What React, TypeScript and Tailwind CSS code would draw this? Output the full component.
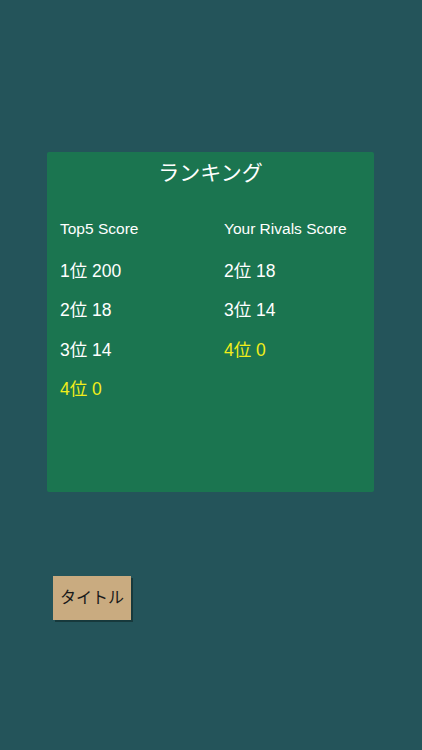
import React from "react";

const top5 = [
  { rank: 1, score: 200, me: false },
  { rank: 2, score: 18, me: false },
  { rank: 3, score: 14, me: false },
  { rank: 4, score: 0, me: true },
];

const rivals = [
  { rank: 2, score: 18, me: false },
  { rank: 3, score: 14, me: false },
  { rank: 4, score: 0, me: true },
];

const font = {
  fontFamily: '"Liberation Sans", "Noto Sans CJK JP", sans-serif',
};

function ScoreColumn({
  label,
  rows,
}: {
  label: string;
  rows: { rank: number; score: number; me: boolean }[];
}) {
  return (
    <div className="flex flex-col">
      <div className="text-[15.5px] leading-[18px] text-white">{label}</div>
      <div className="mt-[23px] flex flex-col gap-[18.4px]">
        {rows.map((r) => (
          <div
            key={r.rank}
            className={
              "text-[17.5px] leading-[21px] " +
              (r.me ? "text-[#f2ee1a]" : "text-white")
            }
          >
            {r.rank}位 {r.score}
          </div>
        ))}
      </div>
    </div>
  );
}

export default function App() {
  return (
    <div
      className="w-[422px] h-[750px] bg-[#24545a] flex flex-col"
      style={font}
    >
      {/* ランキングパネル */}
      <div className="mt-[152px] ml-[47px] w-[327px] h-[340px] rounded-[2px] bg-[#1b7550] px-[13px] pt-[8px]">
        <div className="text-center text-[21px] leading-[26px] text-white">
          ランキング
        </div>
        <div className="mt-[34px] grid grid-cols-[164px_1fr]">
          <ScoreColumn label="Top5 Score" rows={top5} />
          <ScoreColumn label="Your Rivals Score" rows={rivals} />
        </div>
      </div>

      {/* タイトルボタン */}
      <div className="mt-[84px] ml-[53px]">
        <button className="w-[78px] h-[44px] bg-[#c9ab80] text-[16px] text-[#1a1a1a] shadow-[2px_2px_0_#17393c]">
          タイトル
        </button>
      </div>
    </div>
  );
}
